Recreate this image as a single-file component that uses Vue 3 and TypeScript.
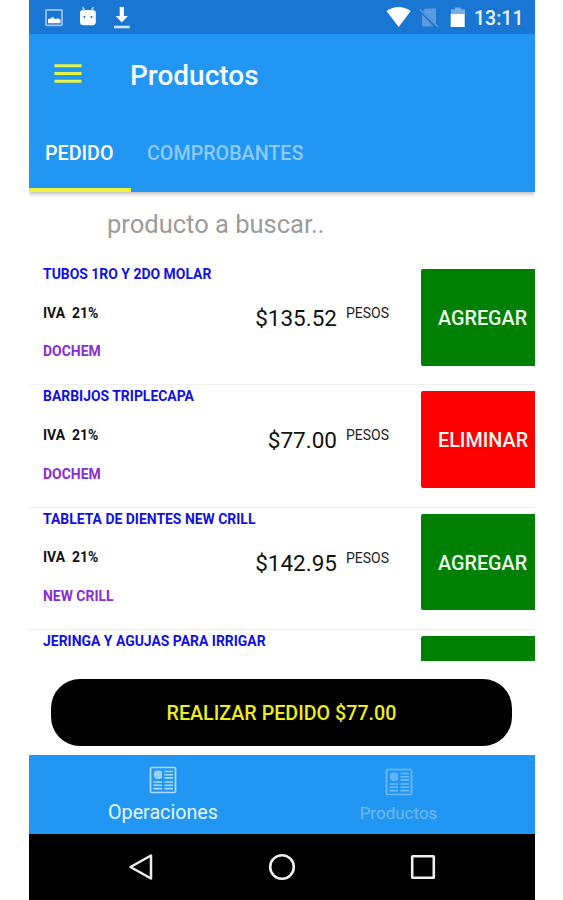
<script setup lang="ts">
interface Product {
  name: string
  brand: string
  price: string
  selected: boolean
}

const products: Product[] = [
  { name: 'TUBOS 1RO Y 2DO MOLAR', brand: 'DOCHEM', price: '$135.52', selected: false },
  { name: 'BARBIJOS TRIPLECAPA', brand: 'DOCHEM', price: '$77.00', selected: true },
  { name: 'TABLETA DE DIENTES NEW CRILL', brand: 'NEW CRILL', price: '$142.95', selected: false },
  { name: 'JERINGA Y AGUJAS PARA IRRIGAR', brand: '', price: '', selected: false },
]
</script>

<template>
  <div class="phone">
    <div class="status">
      <svg class="notifications" width="100" height="34" viewBox="0 0 100 34">
        <rect x="17" y="9.800" width="16" height="15.600" rx="1" fill="none" stroke="#9cc6ef" stroke-width="1.700" />
        <path d="M19 23.200v-4.200l2.500-.5 2-1.500 3 2.200 2.500-1 2.500 1.500v3.500z" fill="#fff" />
        <path d="M51 13q0-3 3-3h9.800q3 0 3 3v8.700q0 3.600-3.600 3.600h-8.600q-3.600 0-3.600-3.600z" fill="#fff" />
        <path d="M55.500 11l-1.800-4M62.500 11l1.800-4" stroke="#b5d6f5" stroke-width="1.800" />
        <circle cx="55.400" cy="17" r="1.100" fill="#1976d2" />
        <circle cx="62.500" cy="17" r="1.100" fill="#1976d2" />
        <path d="M90.700 7h4.200v9h4L92.800 22.500 86.700 16h4z" fill="#fff" />
        <path d="M85 27h15.800" stroke="#cfe5fa" stroke-width="2.600" />
      </svg>
      <svg class="system" width="82" height="34" viewBox="0 0 82 34">
        <path d="M.5 11Q12.500 3.200 24.700 11L12.700 27z" fill="#fff" />
        <path d="M39 8.500h11v15.500L37 11z M36 14.500L47.500 26.500H37.500q-1.500 0-1.500-1.500z" fill="#5c9add" />
        <path d="M34 9.500L52 26.800" stroke="#5c9add" stroke-width="1.600" />
        <path d="M65 14V9.500h3.500l1-2h5l1 2H79V14z" fill="#78aee6" />
        <path d="M64.700 14h14v13h-14z" fill="#fff" />
      </svg>
      <span class="clock">13:11</span>
    </div>

    <header class="header">
      <div class="toolbar">
        <svg class="menu" width="28" height="20" viewBox="0 0 28 20">
          <path d="M.5 1.700h27M.5 9.500h27M.5 17.300h27" stroke="#e6f542" stroke-width="2.900" />
        </svg>
        <h1 class="title">Productos</h1>
      </div>
      <nav class="tabs">
        <span class="tab active">PEDIDO</span>
        <span class="tab">COMPROBANTES</span>
      </nav>
    </header>

    <div class="search"><span>producto a buscar..</span></div>

    <main class="list">
      <article v-for="product in products" :key="product.name" class="row">
        <div class="details">
          <span class="name">{{ product.name }}</span>
          <span v-if="product.price" class="tax">IVA&nbsp; 21%</span>
          <span class="brand">{{ product.brand }}</span>
        </div>
        <span class="price">{{ product.price }}</span>
        <span class="currency">{{ product.price ? 'PESOS' : '' }}</span>
        <div class="action" :class="{ remove: product.selected }">
          <span v-if="product.price">{{ product.selected ? 'ELIMINAR' : 'AGREGAR' }}</span>
        </div>
      </article>
    </main>

    <div class="order"><button class="submit">REALIZAR PEDIDO $77.00</button></div>

    <nav class="bottom">
      <div v-for="(label, i) in ['Operaciones', 'Productos']" :key="label" class="destination" :class="{ current: i === 0 }">
        <svg width="28" height="28" viewBox="0 0 28 28">
          <rect x="1.500" y="1.500" width="25" height="25" rx="1.200" fill="none" stroke="currentColor" stroke-width="1.700" />
          <path d="M5 6q3-2.500 8-.5v6.500l-2 1H7l-2-2.500z" fill="currentColor" opacity=".85" />
          <path d="M15.500 5.500H24M15.500 8.700H24M15.500 11.900H24M4.500 16H13M15.500 16H24M4.500 19.300H13M15.500 19.300H24M4.500 22.600H13M15.500 22.600H24" stroke="currentColor" stroke-width="1.600" />
        </svg>
        <span>{{ label }}</span>
      </div>
    </nav>

    <div class="system-nav">
      <svg width="26" height="28" viewBox="0 0 26 28"><path d="M23 2.500v23L2.500 14z" fill="none" stroke="#eee" stroke-width="2.500" stroke-linejoin="round" /></svg>
      <svg width="28" height="28" viewBox="0 0 28 28"><circle cx="14" cy="14" r="11.800" fill="none" stroke="#eee" stroke-width="2.600" /></svg>
      <svg width="26" height="28" viewBox="0 0 26 28"><rect x="2.200" y="3.200" width="21.600" height="21.600" rx=".6" fill="none" stroke="#eee" stroke-width="2.600" /></svg>
    </div>
  </div>
</template>

<style>
body {
  background: #fff;
}
</style>

<style scoped>
.phone {
  width: 506px;
  height: 900px;
  margin-left: 29px;
  display: flex;
  flex-direction: column;
  overflow: hidden;
  background: #fff;
  font-family: Roboto, sans-serif;
  white-space: nowrap;
}
.status {
  height: 34px;
  flex: none;
  display: flex;
  align-items: center;
  background: #1976d2;
  color: #eaf4fd;
}
.notifications {
  overflow: visible;
}
.system {
  margin-left: 257px;
}
.clock {
  margin: 3px 0 0 6px;
  font-size: 19.5px;
  font-weight: 500;
}
.header {
  height: 158px;
  flex: none;
  background: #2196f3;
  box-shadow: 0 2px 4px rgba(0, 0, 0, 0.28);
  clip-path: inset(0 0 -8px 0);
}
.toolbar {
  height: 81px;
  display: flex;
  align-items: center;
  padding-left: 25px;
}
.menu {
  margin-top: -2px;
}
.title {
  margin: 1px 0 0 48px;
  color: #f4faff;
  font-size: 28px;
  font-weight: 500;
}
.tabs {
  height: 77px;
  display: flex;
}
.tab {
  box-sizing: border-box;
  height: 77px;
  padding: 0 16px;
  line-height: 78px;
  color: #90caf9;
  font-size: 19.7px;
  font-weight: 500;
}
.tab.active {
  width: 102px;
  color: #fff;
  border-bottom: 4px solid #eef53a;
}
.search {
  height: 71px;
  flex: none;
  padding-left: 78px;
  line-height: 65px;
  color: #9b9b9b;
  font-size: 25.5px;
}
.list {
  height: 398px;
  flex: none;
  overflow: hidden;
}
.row {
  height: 122.4px;
  box-sizing: border-box;
  display: flex;
  align-items: flex-start;
  padding: 6px 0 0 14px;
  border-bottom: 1.5px solid #f0f0f0;
}
.details {
  width: 190px;
  display: flex;
  flex-direction: column;
  gap: 22.7px;
  font-size: 13.95px;
  font-weight: 700;
  line-height: 16px;
  margin-top: -3px;
}
.name {
  color: #1010e2;
}
.tax {
  color: #111;
}
.brand {
  color: #8a2bd8;
}
.price {
  width: 104px;
  margin-top: 35px;
  text-align: right;
  color: #111;
  font-size: 22.5px;
  line-height: 28px;
}
.currency {
  width: 75px;
  margin: 36px 0 0 9px;
  color: #222;
  font-size: 14px;
  line-height: 16px;
}
.action {
  width: 114px;
  height: 96.5px;
  box-sizing: border-box;
  padding-left: 17px;
  border-radius: 2px 0 0 2px;
  background: #008000;
  color: #eef8ee;
  font-size: 19.8px;
  font-weight: 500;
  line-height: 99px;
}
.action.remove {
  background: #f00;
}
.order {
  height: 94px;
  flex: none;
  box-sizing: border-box;
  padding: 18px 23px 0 22px;
}
.submit {
  width: 461px;
  height: 67px;
  display: block;
  padding: 2px 0 0;
  border: 0;
  border-radius: 29px;
  background: #000;
  color: #eeee1d;
  font: 500 19.7px Roboto, sans-serif;
}
.bottom {
  height: 79px;
  flex: none;
  display: flex;
  background: #2196f3;
}
.destination {
  box-sizing: border-box;
  width: 203px;
  padding-top: 13px;
  display: flex;
  flex-direction: column;
  align-items: center;
  color: #70bbf7;
  font-size: 17px;
  line-height: 20px;
  gap: 7px;
}
.destination.current {
  width: 268px;
  padding-top: 11px;
  color: #b0dafb;
  font-size: 19.7px;
  gap: 9px;
}
.current span {
  color: #eaf5fe;
}
.system-nav {
  flex: 1;
  display: flex;
  align-items: center;
  justify-content: center;
  gap: 114px;
  background: #000;
}
</style>
